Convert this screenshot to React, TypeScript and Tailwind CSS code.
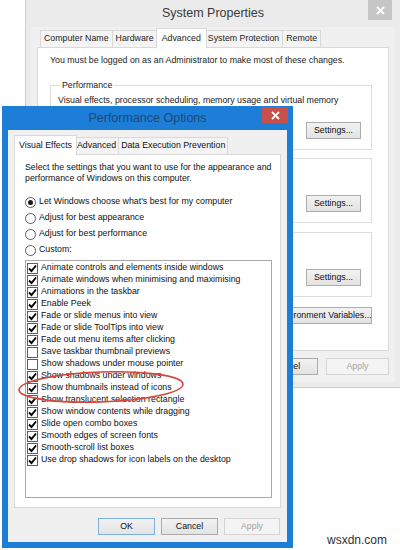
import React from 'react';

const effects: [string, boolean][] = [
  ['Animate controls and elements inside windows', true],
  ['Animate windows when minimising and maximising', true],
  ['Animations in the taskbar', true],
  ['Enable Peek', true],
  ['Fade or slide menus into view', true],
  ['Fade or slide ToolTips into view', true],
  ['Fade out menu items after clicking', true],
  ['Save taskbar thumbnail previews', false],
  ['Show shadows under mouse pointer', false],
  ['Show shadows under windows', true],
  ['Show thumbnails instead of icons', true],
  ['Show translucent selection rectangle', true],
  ['Show window contents while dragging', true],
  ['Slide open combo boxes', true],
  ['Smooth edges of screen fonts', true],
  ['Smooth-scroll list boxes', true],
  ['Use drop shadows for icon labels on the desktop', true],
];

function CloseX() {
  return (
    <svg width="9" height="9" viewBox="0 0 9 9">
      <path d="M1 1 L8 8 M8 1 L1 8" stroke="#fff" strokeWidth="1.8" />
    </svg>
  );
}

function Tab({ label, active, tight }: { label: string; active?: boolean; tight?: boolean }) {
  if (active) {
    return (
      <div className={`relative z-10 -mx-[2px] -mb-px flex h-[20px] items-center whitespace-nowrap border border-b-0 border-[#d9d9d9] bg-white ${tight ? 'px-[4px]' : 'px-[5px]'}`}>
        {label}
      </div>
    );
  }
  return (
    <div className={`-ml-px flex h-[17px] items-center whitespace-nowrap border border-b-0 border-[#d9d9d9] bg-[#f4f4f4] first:ml-0 ${tight ? 'px-[2px]' : 'px-[3px]'}`}>
      {label}
    </div>
  );
}

function Btn({ label, w, disabled, primary }: { label: string; w: string; disabled?: boolean; primary?: boolean }) {
  const base = 'flex h-[17px] shrink-0 items-center justify-center whitespace-nowrap border';
  const look = disabled
    ? 'border-[#d5d5d5] bg-[#f4f4f4] text-[#a3a3a3]'
    : primary
    ? 'border-[#7fb1e0] bg-gradient-to-b from-[#f2f2f2] to-[#e3e3e3] text-[#111]'
    : 'border-[#acacac] bg-gradient-to-b from-[#f2f2f2] to-[#e3e3e3] text-[#111]';
  return <div className={`${base} ${look} ${w}`}>{label}</div>;
}

// group box; the lower two sit behind the Performance Options window, so their captions stay empty
function Group({ legend, text }: { legend?: string; text?: string }) {
  return (
    <fieldset className="w-[322px] border border-[#dcdcdc] px-[7px] pb-[10px]">
      {legend ? (
        <legend className="ml-[2px] px-[2px] leading-[12px]">{legend}</legend>
      ) : (
        <legend className="h-[12px] w-0 p-0" />
      )}
      <div className="mt-[3px] h-[12px] whitespace-nowrap leading-[12px]">{text}</div>
      <div className="mt-[16px] flex justify-end pr-[3px]">
        <Btn label="Settings..." w="w-[55px]" />
      </div>
    </fieldset>
  );
}

function SystemProperties() {
  return (
    <div className="absolute left-[25px] top-[-1px] flex h-[389px] w-[376px] flex-col border border-[#cfcfcf] bg-[#ebebeb] text-[8.8px] text-[#222]">
      <div className="relative flex h-[27px] shrink-0 items-center justify-center text-[12.5px] text-[#3a3a3a]">
        System Properties
        <div className="absolute right-[8px] top-0 flex h-[20px] w-[24px] items-center justify-center bg-[#c6c6c6]">
          <CloseX />
        </div>
      </div>
      <div className="mx-[5px] mb-[5px] flex flex-1 flex-col bg-[#f0f0f0] px-[6px] pt-[2px]">
        <div className="flex h-[18px] items-end pl-[3px]">
          <Tab label="Computer Name" />
          <Tab label="Hardware" />
          <Tab label="Advanced" active />
          <Tab label="System Protection" />
          <Tab label="Remote" />
        </div>
        <div className="flex h-[304px] flex-col border border-[#d9d9d9] bg-white px-[12px] pt-[6px]">
          <div className="whitespace-nowrap leading-[12px]">You must be logged on as an Administrator to make most of these changes.</div>
          <div className="mt-[13px]">
            <Group legend="Performance" text="Visual effects, processor scheduling, memory usage and virtual memory" />
          </div>
          <div className="mt-[2px]">
            <Group />
          </div>
          <div className="mt-[3px]">
            <Group />
          </div>
          <div className="mt-[10px] flex justify-end pr-[4px]">
            <Btn label="Environment Variables..." w="w-[96px]" />
          </div>
        </div>
        <div className="mt-[7px] flex justify-end gap-[8px]">
          <Btn label="OK" w="w-[63px]" />
          <Btn label="Cancel" w="w-[63px]" />
          <Btn label="Apply" w="w-[63px]" disabled />
        </div>
      </div>
    </div>
  );
}

function Radio({ label, on }: { label: string; on?: boolean }) {
  return (
    <div className="flex h-[16px] items-center gap-[3px]">
      <div className="flex h-[11px] w-[11px] items-center justify-center rounded-full border border-[#5f5f5f] bg-white">
        {on && <div className="h-[5px] w-[5px] rounded-full bg-[#1a1a1a]" />}
      </div>
      <span className="whitespace-nowrap">{label}</span>
    </div>
  );
}

function Check({ label, on }: { label: string; on: boolean }) {
  return (
    <div className="flex h-[12px] items-center gap-[3px]">
      <div className="flex h-[11px] w-[11px] shrink-0 items-center justify-center border border-[#5f5f5f] bg-white">
        {on && (
          <svg width="9" height="9" viewBox="0 0 9 9">
            <path d="M1 4.5 L3.5 7 L8 1.5" stroke="#000" strokeWidth="1.9" fill="none" />
          </svg>
        )}
      </div>
      <span className="whitespace-nowrap">{label}</span>
    </div>
  );
}

function PerformanceOptions() {
  return (
    <div className="absolute left-[2px] top-[106px] flex h-[442px] w-[291px] flex-col bg-[#1c7ed6] px-[6px] pb-[6px] text-[8.8px] text-[#111]">
      <div className="relative flex h-[24px] shrink-0 items-center justify-center text-[12.5px] text-[#1e4a78]">
        Performance Options
        <div className="absolute right-[-1px] top-[1px] flex h-[16px] w-[26px] items-center justify-center bg-[#c7504b]">
          <CloseX />
        </div>
      </div>
      <div className="flex flex-1 flex-col bg-[#f0f0f0] px-[6px] pt-[5px]">
        <div className="flex h-[19px] items-end pl-[2px]">
          <Tab label="Visual Effects" active tight />
          <Tab label="Advanced" tight />
          <Tab label="Data Execution Prevention" tight />
        </div>
        <div className="flex h-[354px] flex-col border border-[#d9d9d9] bg-white px-[10px] pt-[7px]">
          <div className="whitespace-nowrap leading-[11px]">
            Select the settings that you want to use for the appearance and
            <br />
            performance of Windows on this computer.
          </div>
          <div className="mt-[10px]">
            <Radio label="Let Windows choose what's best for my computer" on />
            <Radio label="Adjust for best appearance" />
            <Radio label="Adjust for best performance" />
            <Radio label="Custom:" />
          </div>
          <div className="mt-[2px] h-[238px] w-[247px] overflow-hidden border border-[#a9a9a9] bg-white pl-[1px] pt-[1px]">
            {effects.map(([label, on]) => (
              <Check key={label} label={label} on={on} />
            ))}
          </div>
        </div>
        <div className="mt-[10px] flex justify-end gap-[6px] pr-[1px]">
          <Btn label="OK" w="w-[57px]" primary />
          <Btn label="Cancel" w="w-[57px]" />
          <Btn label="Apply" w="w-[56px]" disabled />
        </div>
      </div>
    </div>
  );
}

export default function App() {
  return (
    <div className="relative h-[550px] w-[400px] overflow-hidden bg-white font-['Liberation_Sans',Arial,sans-serif]">
      <SystemProperties />
      <PerformanceOptions />
      <svg className="pointer-events-none absolute left-0 top-0" width="400" height="550">
        <ellipse cx="101" cy="387" rx="82" ry="15" fill="none" stroke="#d8443c" strokeWidth="1.6" transform="rotate(-2 101 387)" />
      </svg>
      <div className="absolute left-[327px] top-[533px] text-[12px] leading-[14px] text-[#333]">wsxdn.com</div>
    </div>
  );
}
